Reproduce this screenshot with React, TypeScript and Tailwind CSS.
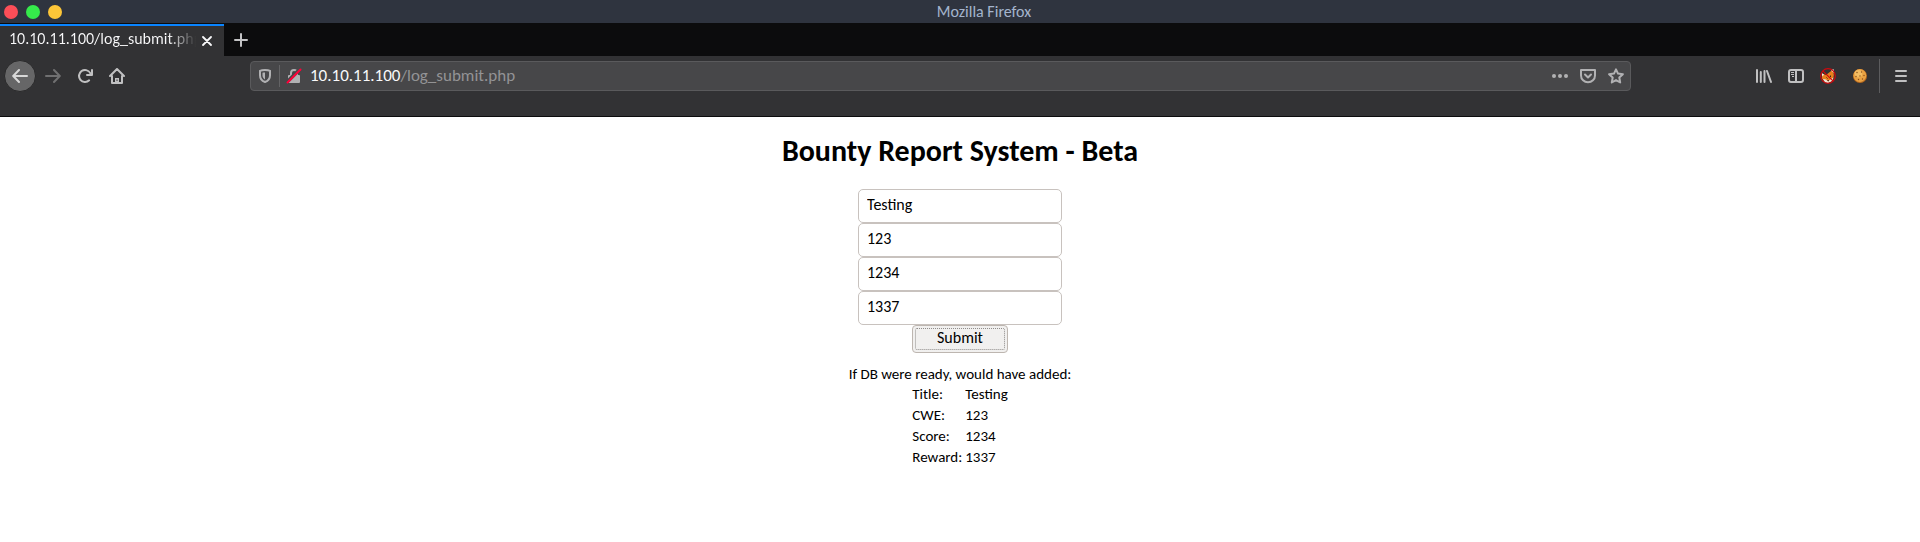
import { useState } from 'react';
import type { ReactNode } from 'react';

const fields = [
  { name: 'title', label: 'Title', value: 'Testing' },
  { name: 'cwe', label: 'CWE', value: '123' },
  { name: 'score', label: 'Score', value: '1234' },
  { name: 'reward', label: 'Reward', value: '1337' },
];

function ToolButton({ label, children, className = '' }: { label: string; children: ReactNode; className?: string }) {
  return (
    <button type="button" aria-label={label} className={`flex size-8 shrink-0 items-center justify-center ${className}`}>
      {children}
    </button>
  );
}

function BackIcon() {
  return (
    <svg width="16" height="16" viewBox="0 0 16 16" fill="none" stroke="currentColor" strokeWidth="2" strokeLinecap="round" strokeLinejoin="round">
      <path d="M15 8H1.5M7 2 1.2 8 7 14" />
    </svg>
  );
}

function ForwardIcon() {
  return (
    <svg width="16" height="16" viewBox="0 0 16 16" fill="none" stroke="currentColor" strokeWidth="2" strokeLinecap="round" strokeLinejoin="round">
      <path d="M1 8h13.5M9 2l5.8 6L9 14" />
    </svg>
  );
}

function ReloadIcon() {
  return (
    <svg width="16" height="16" viewBox="0 0 16 16">
      <path d="M15 1a1 1 0 0 0-1 1v2.4A7 7 0 1 0 12.9 13a1 1 0 0 0-1.4-1.4A5 5 0 1 1 12.7 6H10a1 1 0 0 0 0 2h5a1 1 0 0 0 1-1V2a1 1 0 0 0-1-1z" fill="currentColor" />
    </svg>
  );
}

function HomeIcon() {
  return (
    <svg width="16" height="16" viewBox="0 0 16 16" fill="none" stroke="currentColor" strokeWidth="2" strokeLinecap="round" strokeLinejoin="round">
      <path d="M1 8l7-7 7 7M3 8v7h10V8" />
      <path d="M6 15v-5h4v5z" fill="currentColor" stroke="none" />
      <path d="M8 11.500v1.500" stroke="#323234" strokeWidth="1" strokeLinecap="butt" />
    </svg>
  );
}

function ShieldIcon() {
  return (
    <svg width="16" height="16" viewBox="0 0 16 16" fill="none">
      <path d="M8 2C5.8 2 3.8 2.4 3 2.8v4.4c0 3.5 2.200 5.800 5 6.800 2.800-1 5-3.300 5-6.800V2.800C12.200 2.400 10.200 2 8 2z" stroke="currentColor" strokeWidth="2" />
      <path d="M8 4.500c-1 0-2 .1-2.500.3V7.500C5.500 9.300 6.500 10.600 8 11.400z" fill="currentColor" />
    </svg>
  );
}

function InsecureIcon() {
  return (
    <svg width="16" height="16" viewBox="0 0 16 16" fill="none">
      <path d="M5 8V5a3 3 0 0 1 6 0v3" stroke="#b1b1b3" strokeWidth="2" />
      <rect x="2" y="7" width="12" height="8" rx="1" fill="#b1b1b3" />
      <path d="M1 14 14 1" stroke="#474749" strokeWidth="3.500" />
      <path d="M1.500 14.500 14.500 1.500" stroke="#ff0039" strokeWidth="2" strokeLinecap="round" />
    </svg>
  );
}

function PocketIcon() {
  return (
    <svg width="16" height="16" viewBox="0 0 16 16" fill="none" stroke="currentColor" strokeWidth="2" strokeLinecap="round" strokeLinejoin="round">
      <path d="M1 2h14v5.500a7 6.800 0 0 1-14 0z" />
      <path d="M5 6.500l3 3 3-3" />
    </svg>
  );
}

function StarIcon() {
  return (
    <svg width="16" height="16" viewBox="0 0 16 16" fill="none" stroke="currentColor" strokeWidth="2" strokeLinejoin="round">
      <path d="M8 1.300l2 4.300 4.900.6-3.600 3.300.9 5L8 12.100l-4.200 2.400.9-5L1.100 6.200 6 5.600z" />
    </svg>
  );
}

function LibraryIcon() {
  return (
    <svg width="16" height="16" viewBox="0 0 16 16" fill="none" stroke="currentColor" strokeWidth="2" strokeLinecap="round">
      <path d="M1 2v12M4.800 4v10M8.500 3v11M11 3l4 11" />
    </svg>
  );
}

function SidebarIcon() {
  return (
    <svg width="16" height="16" viewBox="0 0 16 16" fill="none" stroke="currentColor">
      <rect x="1" y="2" width="14" height="12" rx="2" strokeWidth="2" />
      <path d="M8 2v12" strokeWidth="2" />
      <path d="M3 4.500h3M3 6.500h3M4 8.500h2" strokeWidth="1" />
    </svg>
  );
}

function FoxIcon() {
  return (
    <svg width="16" height="16" viewBox="0 0 16 16" fill="none">
      <path d="M2 5.500 6 7l7-5.500.8 5.500-.8 5-4 2.500-4-.5-3-3.500z" fill="#e8801c" />
      <path d="M11 2.500l2.500-1.500.5 4zM1.500 5l2.500 1.500-1.500 2z" fill="#f5efe8" />
      <path d="M3 11l3 .5 2 2 3-2.500 2.500-1.500-1.500 3.500-4 2-3-.5z" fill="#efe3d6" />
      <path d="M6.500 9.500l1 1M10.500 7.500v1.500M7.500 12.500l1.500.3" stroke="#3a2418" strokeWidth="1" />
      <circle cx="8" cy="8" r="7.300" stroke="#d0080c" strokeWidth="1.200" />
      <path d="M2.800 2.800l10.400 10.400" stroke="#d0080c" strokeWidth="1.200" />
    </svg>
  );
}

function CookieIcon() {
  return (
    <svg width="16" height="16" viewBox="0 0 16 16">
      <circle cx="8" cy="8" r="7" fill="#b96a1d" />
      <circle cx="7.800" cy="7.500" r="6.400" fill="#e9a243" />
      <circle cx="6.500" cy="5.800" r="3.800" fill="#f3bd62" />
      <g fill="#8a4c18">
        <circle cx="5" cy="4.500" r=".7" />
        <circle cx="9.500" cy="4" r=".7" />
        <circle cx="4" cy="8.500" r=".7" />
        <circle cx="8" cy="8" r=".7" />
        <circle cx="12" cy="7.500" r=".7" />
        <circle cx="6.500" cy="11.500" r=".7" />
        <circle cx="10.500" cy="11" r=".7" />
      </g>
    </svg>
  );
}

function TitleBar() {
  return (
    <header className="flex h-[23px] items-center bg-[#2f343f] pl-1">
      <div className="flex gap-2">
        <button type="button" aria-label="Close window" className="size-3.5 rounded-full bg-[#fc4e58]" />
        <button type="button" aria-label="Maximize window" className="size-3.5 rounded-full bg-[#35ea4b]" />
        <button type="button" aria-label="Minimize window" className="size-3.5 rounded-full bg-[#fdc638]" />
      </div>
      <p className="flex-1 pr-3.5 text-center text-base leading-5 text-[#a4b4cd]">Mozilla Firefox</p>
    </header>
  );
}

function TabBar() {
  return (
    <div className="flex h-[33px] bg-[#0c0c0d] pt-px">
      <div className="flex w-56 items-center border-t-2 border-[#0a84ff] bg-[#323234] pl-[9px] text-[#f9f9fa]">
        <span className="mr-px w-[187px] overflow-hidden whitespace-nowrap bg-linear-to-r from-[#f9f9fa] from-85% to-transparent bg-clip-text pb-1 text-base leading-5 text-transparent">
          10.10.11.100/log_submit.php
        </span>
        <button type="button" aria-label="Close tab" className="flex size-5 items-center justify-center">
          <svg width="10" height="10" viewBox="0 0 10 10" fill="none" stroke="currentColor" strokeWidth="1.800" strokeLinecap="round">
            <path d="M1 1l8 8M9 1 1 9" />
          </svg>
        </button>
      </div>
      <button type="button" aria-label="New tab" className="flex w-[34px] items-center justify-center text-[#c4c4c5]">
        <svg width="14" height="14" viewBox="0 0 14 14" fill="none" stroke="currentColor" strokeWidth="2" strokeLinecap="round">
          <path d="M7 1v12M1 7h12" />
        </svg>
      </button>
    </div>
  );
}

function Toolbar() {
  return (
    <nav aria-label="Navigation" className="h-[61px] border-b border-[#0c0c0d] bg-[#323234] text-[#c0c0c1]">
      <div className="flex h-10 items-center pl-1 pr-[3px]">
        <ToolButton label="Back" className="mr-px rounded-full border border-[#29292a] bg-[#666667] text-[#d8d8d8]"><BackIcon /></ToolButton>
        <ToolButton label="Forward" className="text-[#707071]"><ForwardIcon /></ToolButton>
        <ToolButton label="Reload"><ReloadIcon /></ToolButton>
        <ToolButton label="Home"><HomeIcon /></ToolButton>
        <div className="w-[117px] shrink" />
        <div className="flex h-[30px] min-w-0 flex-1 items-center rounded-[4px] border border-[#5a5a5c] bg-[#474749] px-1.5 text-[#b1b1b3]">
          <button type="button" aria-label="Tracking protection" className="mr-1.5"><ShieldIcon /></button>
          <span className="h-[22px] w-px bg-[#636365]" />
          <button type="button" aria-label="Connection not secure" className="mx-1.5"><InsecureIcon /></button>
          <a href="#page" className="min-w-0 flex-1 pl-0.5 text-[17px] leading-5 text-[#939395]">
            <span className="text-[#f9f9fa]">10.10.11.100</span>/log_submit.php
          </a>
          <div className="flex gap-3">
            <button type="button" aria-label="Page actions">
              <svg width="16" height="16" viewBox="0 0 16 16" fill="currentColor">
                <circle cx="2" cy="8" r="2" /><circle cx="8" cy="8" r="2" /><circle cx="14" cy="8" r="2" />
              </svg>
            </button>
            <button type="button" aria-label="Save to Pocket"><PocketIcon /></button>
            <button type="button" aria-label="Bookmark this page"><StarIcon /></button>
          </div>
        </div>
        <div className="w-[117px] shrink" />
        <ToolButton label="Library"><LibraryIcon /></ToolButton>
        <ToolButton label="Sidebars"><SidebarIcon /></ToolButton>
        <ToolButton label="Proxy disabled"><FoxIcon /></ToolButton>
        <ToolButton label="Cookies"><CookieIcon /></ToolButton>
        <span className="mx-[3px] h-[34px] w-px shrink-0 bg-[#5c5c5e]" />
        <ToolButton label="Menu" className="ml-0.5">
          <svg width="12" height="12" viewBox="0 0 12 12" stroke="currentColor" strokeWidth="2" strokeLinecap="round">
            <path d="M1 1h10M1 6h10M1 11h10" />
          </svg>
        </ToolButton>
      </div>
    </nav>
  );
}

export default function App() {
  const [values, setValues] = useState(fields.map((f) => f.value));

  return (
    <div className="min-h-screen bg-white font-['Carlito','Lato',sans-serif]">
      <TitleBar />
      <TabBar />
      <Toolbar />
      <main id="page" className="flex flex-col items-center pt-4 text-black">
        <h1 className="text-[30px] font-bold leading-9">Bounty Report System - Beta</h1>
        <form className="mt-5 flex flex-col items-center" onSubmit={(e) => e.preventDefault()}>
          {fields.map((f, i) => (
            <input
              key={f.name}
              aria-label={f.label}
              name={f.name}
              value={values[i]}
              onChange={(e) => setValues(values.map((v, j) => (j === i ? e.target.value : v)))}
              className="h-[34px] w-51 rounded-[5px] border border-[#c8c2be] px-2 pb-1 text-base outline-none"
            />
          ))}
          <button type="submit" className="h-7 w-24 rounded-[4px] border border-[#bdb6b0] bg-[#f1f0ef] p-0.5 text-base leading-[18px]">
            <span className="block h-full rounded-[2px] border border-dotted border-[#8f8c8a]">Submit</span>
          </button>
        </form>
        <p className="mt-3 text-[15px] leading-[18px]">If DB were ready, would have added:</p>
        <table className="mt-px text-[15px] leading-[21px]">
          <tbody>
            {fields.map((f) => (
              <tr key={f.name}>
                <th scope="row" className="p-0 pr-[3px] text-left font-normal">{f.label}:</th>
                <td className="p-0">{f.value}</td>
              </tr>
            ))}
          </tbody>
        </table>
      </main>
    </div>
  );
}
